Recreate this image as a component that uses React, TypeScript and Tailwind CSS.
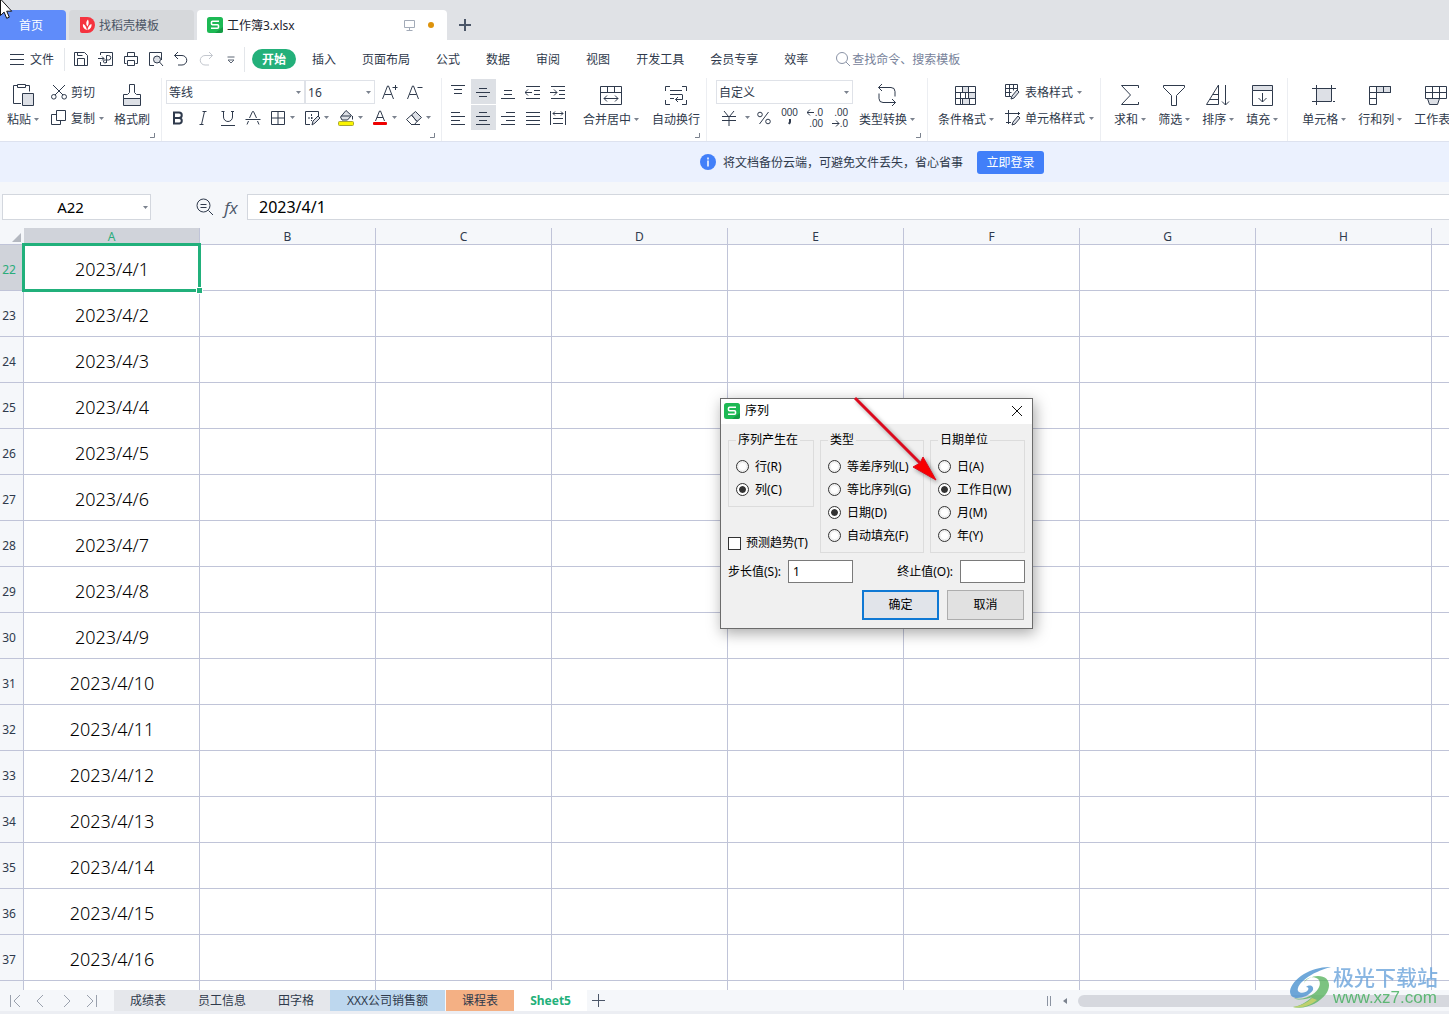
import { useState } from 'react';
import type { ReactNode } from 'react';

const INK = '#2f3a4c';
const FILL = '#dde0e6';

const menuItems = ['插入', '页面布局', '公式', '数据', '审阅', '视图', '开发工具', '会员专享', '效率'];
const columns = ['A', 'B', 'C', 'D', 'E', 'F', 'G', 'H', 'I'];
const firstRow = 22;
const rows = Array.from({ length: 17 }, (_, i) => ({
  num: firstRow + i,
  date: i < 16 ? `2023/4/${i + 1}` : '',
}));

interface IconProps {
  size?: number;
  children: ReactNode;
  className?: string;
}

function Icon({ size = 16, children, className = '' }: IconProps) {
  return (
    <svg
      width={size}
      height={size}
      viewBox={`0 0 ${size} ${size}`}
      fill="none"
      stroke={INK}
      className={`shrink-0 ${className}`}
      aria-hidden="true"
    >
      {children}
    </svg>
  );
}

function Caret() {
  return (
    <svg width="5" height="3" viewBox="0 0 5 3" className="shrink-0" aria-hidden="true">
      <path d="M0 0h5L2.500 3z" fill="#7b828e" />
    </svg>
  );
}

function SheetLogo() {
  return (
    <svg width="16" height="16" viewBox="0 0 16 16" className="shrink-0" aria-hidden="true">
      <rect width="16" height="16" rx="2.500" fill="#1db954" />
      <path d="M16 10v3.500a2.500 2.500 0 0 1-2.500 2.500H8z" fill="#149a44" />
      <path d="M12 4.200H5.500a1 1 0 0 0-1 1v1.500a1 1 0 0 0 1 1h5a1 1 0 0 1 1 1v1.600a1 1 0 0 1-1 1H4" fill="none" stroke="#fff" strokeWidth="1.600" />
    </svg>
  );
}

function BigButton({ icon, label, caret = true }: { icon: ReactNode; label: string; caret?: boolean }) {
  return (
    <button className="flex shrink-0 flex-col items-center gap-1 pt-[5px]">
      <Icon size={24}>{icon}</Icon>
      <span className="flex items-center gap-[3px] whitespace-nowrap">
        {label}
        {caret && <Caret />}
      </span>
    </button>
  );
}

function RowButton({ icon, label, caret = true }: { icon: ReactNode; label: string; caret?: boolean }) {
  return (
    <button className="flex h-[26px] items-center gap-1 whitespace-nowrap">
      <Icon>{icon}</Icon>
      {label}
      {caret && <Caret />}
    </button>
  );
}

function Tool({ name, children, active = false }: { name: string; children: ReactNode; active?: boolean }) {
  return (
    <button
      aria-label={name}
      className={`flex h-[25px] w-[25px] shrink-0 items-center pl-1 ${active ? 'bg-[#dde0e5]' : ''}`}
    >
      <Icon>{children}</Icon>
    </button>
  );
}

function DropTool({ name, children }: { name: string; children: ReactNode }) {
  return (
    <button aria-label={name} className="flex h-[25px] w-[34px] shrink-0 items-center gap-1 pl-1">
      <Icon>{children}</Icon>
      <Caret />
    </button>
  );
}

function Picker({ name, value, className }: { name: string; value: string; className: string }) {
  return (
    <div className={`relative h-6 ${className}`}>
      <select
        aria-label={name}
        defaultValue={value}
        className="h-full w-full appearance-none border border-[#dfe2e8] bg-white px-[2px] outline-none"
      >
        <option>{value}</option>
      </select>
      <span className="pointer-events-none absolute inset-y-0 right-1 flex items-center">
        <Caret />
      </span>
    </div>
  );
}

function Group({ children, className, corner = false }: { children: ReactNode; className: string; corner?: boolean }) {
  return (
    <div className={`relative flex shrink-0 border-r border-[#eceef2] ${className}`}>
      {children}
      {corner && (
        <svg width="5" height="5" viewBox="0 0 5 5" className="absolute right-[6px] bottom-[3px]" aria-hidden="true">
          <path d="M0 4.500h4.500V0" fill="none" stroke="#7b828e" />
        </svg>
      )}
    </div>
  );
}

function TitleTabs() {
  return (
    <div className="relative flex h-10 shrink-0 items-end gap-[3px] overflow-hidden bg-[#e0e2e6]">
      <button className="h-[30px] w-[66px] rounded-tr bg-[#5f8cfa] pr-1 text-white">首页</button>
      <button className="flex h-[30px] w-[125px] items-center gap-1 rounded-t bg-[#d6d8db] pl-[10px] text-[#4b5565]">
        <svg width="16" height="16" viewBox="0 0 16 16" aria-hidden="true">
          <path d="M1 0h7.500a7.500 8 0 0 1 0 16H3a2 2 0 0 1-2-2z" fill="#f5333f" />
          <path d="M8 13C4.500 12 3.500 9.500 4 7c2 .8 3.200 2.500 4 6zM8.500 9.500C6.500 7 7 4.500 9 2.500c1 2.500 1 4.500-.5 7zM8.500 13c.3-3 1.700-5.200 4-6 .5 3-1 5.300-4 6z" fill="#fff" />
        </svg>
        找稻壳模板
      </button>
      <div className="flex h-[30px] w-[250px] items-center gap-1 rounded-t bg-white px-[10px] text-[#1c2430]">
        <SheetLogo />
        <span className="flex-1">工作簿3.xlsx</span>
        <svg width="13" height="12" viewBox="0 0 13 12" fill="none" stroke="#a3abb8" aria-hidden="true">
          <path d="M1.500 1.500h10v7h-10zM6.500 8.500v3M3.500 11.500h6" />
        </svg>
        <span className="mr-[3px] ml-2 h-[6px] w-[6px] rounded-full bg-[#dd930c]" />
      </div>
      <button aria-label="新建" className="flex h-[30px] w-[30px] items-center justify-center">
        <svg width="12" height="12" viewBox="0 0 12 12" stroke="#4b5668" strokeWidth="2" aria-hidden="true">
          <path d="M6 0v12M0 6h12" />
        </svg>
      </button>
      {/* mouse pointer */}
      <svg width="13" height="20" viewBox="0 0 13 20" className="absolute top-0 left-0" aria-hidden="true">
        <path d="M.5-1v16.500l3.600-3.400 2.600 6.200 2.600-1.100-2.600-6h5z" fill="#fff" stroke="#111" />
      </svg>
    </div>
  );
}

function MenuBar() {
  return (
    <nav className="flex h-[38px] shrink-0 items-center overflow-hidden bg-white whitespace-nowrap">
      <button className="flex items-center gap-[6px] border-r border-[#e3e6ea] py-[3px] pr-[10px] pl-[10px]">
        <svg width="14" height="11" viewBox="0 0 14 11" stroke={INK} aria-hidden="true">
          <path d="M0 .5h14M0 5.500h14M0 10.500h14" />
        </svg>
        文件
      </button>
      <div className="flex border-r border-[#e3e6ea] pl-1">
        <Tool name="保存">
          <path d="M1.500 1.500h10l3 3v10h-13zM4.500 14.500v-7h7v7M4.500 1.500v3h5" />
        </Tool>
        <Tool name="输出为PDF">
          <path d="M2.500 4V1.500h12v13h-12V11M0 7.500h6M4 5.500l2 2-2 2M8.500 12V4.500h2a2.200 2.200 0 0 1 0 4.500h-3a1.500 1.500 0 1 0 1 1.500" />
        </Tool>
        <Tool name="打印">
          <path d="M4.500 5.500v-4h7v4M3.500 12.500h-2v-7h13v7h-2M4.500 9.500h7v5h-7z" />
        </Tool>
        <Tool name="打印预览">
          <path d="M6 14.500H1.500v-13h12V9" />
          <circle cx="9" cy="8.500" r="3.500" fill={FILL} />
          <path d="M11.500 11l3.500 4" />
        </Tool>
        <Tool name="撤销">
          <path d="M5 1L1.500 4.500 5 8M1.500 4.500H9a4.500 4.500 0 0 1 0 9.500H5" />
        </Tool>
        <Tool name="恢复">
          <path d="M11 1l3.500 3.500L11 8M14.500 4.500H7A4.500 4.500 0 0 0 7 14h4" stroke="#c3c7ce" />
        </Tool>
        <Tool name="自定义快速访问">
          <path d="M4.500 6h7M5 9l3 3 3-3z" stroke="#5d6675" />
        </Tool>
      </div>
      <button className="mr-4 ml-[7px] h-5 rounded-full bg-[#23b07a] px-[10px] font-bold text-white">开始</button>
      <div className="flex gap-[26px]">
        {menuItems.map((item) => (
          <button key={item}>{item}</button>
        ))}
      </div>
      <button className="ml-7 flex items-center gap-[2px] text-[#77829a]">
        <svg width="14" height="14" viewBox="0 0 14 14" fill="none" stroke="#8a93a6" aria-hidden="true">
          <circle cx="6" cy="6" r="5.500" />
          <path d="M10 10l4 4" />
        </svg>
        查找命令、搜索模板
      </button>
    </nav>
  );
}

function Ribbon() {
  return (
    <div className="flex h-16 shrink-0 overflow-hidden border-b border-[#dde2ef] bg-white">
      <Group className="gap-3 pr-[11px] pl-[7px]" corner>
        <BigButton
          label="粘贴"
          icon={
            <>
              <path d="M10 20.500H2.500v-18h4M14.500 2.500h4v6M6.500 1.500h8v3h-8z" />
              <path d="M11.500 10.500h11v12h-11z" fill={FILL} />
            </>
          }
        />
        <div className="flex w-[51px] flex-col items-start pt-px">
          <RowButton
            label="剪切"
            caret={false}
            icon={
              <>
                <path d="M2 1l10 10M14 1L4 11" />
                <circle cx="2.800" cy="12.800" r="2.300" />
                <circle cx="13.200" cy="12.800" r="2.300" />
              </>
            }
          />
          <RowButton label="复制" icon={<path d="M5.500.500h9v10h-9zM5.500 4.500h-5v10h9v-4" />} />
        </div>
        <BigButton
          label="格式刷"
          caret={false}
          icon={
            <>
              <path d="M3.500 15.500h17v7h-17z" fill={FILL} />
              <path d="M9.500 1.500h5v8l2 2h4v4h-17v-4h4l2-2z" />
            </>
          }
        />
      </Group>

      <Group className="flex-col pt-px pr-[5px] pl-1" corner>
        <div className="flex h-[26px] items-center">
          <Picker name="字体" value="等线" className="w-[139px]" />
          <Picker name="字号" value="16" className="w-[70px]" />
          <div className="flex pl-[3px]">
            <Tool name="增大字号">
              <path d="M.500 15L5.500 2h1l5 13M2.500 10.500h7M10.500 3.500h5M13.500 1v5" />
            </Tool>
            <Tool name="减小字号">
              <path d="M.500 15L5.500 2h1l5 13M2.500 10.500h7M10.500 3.500h5" />
            </Tool>
          </div>
        </div>
        <div className="flex h-[25px] items-center">
          <Tool name="加粗">
            <path d="M4 2.500h5a2.700 2.700 0 0 1 0 5.500H4zM4 8h5.500a2.800 2.800 0 0 1 0 5.500H4z" strokeWidth="2" />
          </Tool>
          <Tool name="倾斜">
            <path d="M7.500 1.500h4M4.500 14.500h4M9.500 1.500l-3 13" />
          </Tool>
          <Tool name="下划线">
            <path d="M3.500 1v6a4.500 4.500 0 0 0 9 0V1M1.500 1.500h3M11 1.500h3M1 15.500h14" />
          </Tool>
          <Tool name="删除线">
            <path d="M4.500 8l3-6.500h1l3 6.500M.500 9.500h15M3.500 11L2 14.500M12.500 11l1.500 3.500" />
          </Tool>
          <DropTool name="边框">
            <path d="M1.500 1.500h13v13h-13zM8 1.500v13M1.500 8h13" />
          </DropTool>
          <DropTool name="单元格格式">
            <path d="M6 14.500H1.500v-13h13V6" />
            <path d="M4 8h6M7.500 4v7" strokeDasharray="2 1" />
            <path d="M8 15l1-4 5-5 2 2-5 5z" fill={FILL} />
          </DropTool>
          <DropTool name="填充颜色">
            <path d="M8 .5l5.500 5-4 4.500H4L2.500 7zM3 6h10" fill={FILL} />
            <path d="M14.500 6v3.500" />
            <rect x=".5" y="11.500" width="15" height="4" rx="1" fill="#fbf500" stroke="#a8a630" />
          </DropTool>
          <DropTool name="字体颜色">
            <path d="M3.500 11L7.500 1h1l4 10M5 7.500h6" />
            <rect x="1" y="12" width="14" height="3" rx="1" fill="#ee0000" stroke="none" />
          </DropTool>
          <DropTool name="清除">
            <path d="M5.500 5L9.500 1.500l6 6-4.500 4z" fill={FILL} />
            <path d="M5.500 5L.500 9.500l5 5h3l2.500-3zM5 14.500h9" />
          </DropTool>
        </div>
      </Group>

      <Group className="pr-[6px] pl-1" corner>
        <div className="mr-3 flex flex-col gap-px pt-px">
          <div className="flex">
            <Tool name="顶端对齐">
              <path d="M1 1.500h14M4 5.500h8M4 9.500h8" />
            </Tool>
            <Tool name="垂直居中" active>
              <path d="M4 4.500h8M1 8.500h14M4 12.500h8" />
            </Tool>
            <Tool name="底端对齐">
              <path d="M4 6.500h8M4 10.500h8M1 14.500h14" />
            </Tool>
            <Tool name="减少缩进">
              <path d="M1 2.500h14M9 6.500h6M9 10.500h6M1 14.500h14M0 8.500h7M3 5.500l-3 3 3 3" />
            </Tool>
            <Tool name="增加缩进">
              <path d="M1 2.500h14M9 6.500h6M9 10.500h6M1 14.500h14M0 8.500h7M4 5.500l3 3-3 3" />
            </Tool>
          </div>
          <div className="flex">
            <Tool name="左对齐">
              <path d="M1 2.500h9M1 6.500h14M1 10.500h9M1 14.500h14" />
            </Tool>
            <Tool name="水平居中" active>
              <path d="M4 2.500h8M1 6.500h14M4 10.500h8M1 14.500h14" />
            </Tool>
            <Tool name="右对齐">
              <path d="M6 2.500h9M1 6.500h14M6 10.500h9M1 14.500h14" />
            </Tool>
            <Tool name="两端对齐">
              <path d="M1 2.500h14M1 6.500h14M1 10.500h14M1 14.500h14" />
            </Tool>
            <Tool name="分散对齐">
              <path d="M.500 1v14M15.500 1v14M3 3.500h10M5 1.500l-2 2 2 2M11 1.500l2 2-2 2M3 8.500h10M3 13.500h10" />
            </Tool>
          </div>
        </div>
        <BigButton
          label="合并居中"
          icon={<path d="M1.500 3.500h21v18h-21zM1.500 9.500h21M8.500 3.500v6M15.500 3.500v6M5 15.500h14M8 12.500l-3 3 3 3M16 12.500l3 3-3 3" />}
        />
        <span className="w-[13px] shrink-0" />
        <BigButton
          label="自动换行"
          caret={false}
          icon={
            <path d="M6 3.500H1.500V8M18 3.500h4.500V8M6 21.500H1.500V17M18 21.500h4.500V17M6 7.500h12M6 11.500h12M6 15.500h4M18.500 11.500v5h-7M14 14l-2.500 2.500L14 19" />
          }
        />
      </Group>

      <Group className="gap-[6px] pr-3 pl-[9px]" corner>
        <div className="pt-[2px]">
          <Picker name="数字格式" value="自定义" className="w-[137px]" />
          <div className="flex h-[27px] items-center font-['Liberation_Sans'] text-[10px] leading-[11px]">
            <button aria-label="货币" className="flex w-9 items-center gap-2 pl-[5px]">
              <Icon>
                <path d="M3 1l4.500 5.500M13 1L8.500 6.500M1 6.500h14M1 10.500h14M8 6.500V16" />
              </Icon>
              <Caret />
            </button>
            <Tool name="百分比">
              <circle cx="4" cy="4.500" r="2.300" />
              <circle cx="12" cy="11.500" r="2.300" />
              <path d="M12.500 2l-9 12" />
            </Tool>
            <button aria-label="千位分隔样式" className="flex h-[25px] w-[25px] flex-col items-center justify-center">
              <span>000</span>
              <Icon size={10}>
                <path d="M5 1v3l-1 2" strokeWidth="2" />
              </Icon>
            </button>
            <button aria-label="增加小数位数" className="flex h-[25px] w-[25px] flex-col items-end justify-center pr-1">
              <span className="flex items-center">
                <Icon size={8}>
                  <path d="M0 4.500h7M3 1.500l-3 3 3 3" />
                </Icon>
                .0
              </span>
              <span>.00</span>
            </button>
            <button aria-label="减少小数位数" className="flex h-[25px] w-[25px] flex-col items-end justify-center pr-1">
              <span>.00</span>
              <span className="flex items-center">
                <Icon size={8}>
                  <path d="M0 4.500h7M4 1.500l3 3-3 3" />
                </Icon>
                .0
              </span>
            </button>
          </div>
        </div>
        <BigButton
          label="类型转换"
          icon={<path d="M3.500 4.500H16a4 4 0 0 1 4 4v5M7 1L3.500 4.500 7 8M20.500 19.500H8a4 4 0 0 1-4-4v-5M17 16l3.500 3.500L17 23" />}
        />
      </Group>

      <Group className="gap-[11px] pr-[6px] pl-[10px]">
        <BigButton
          label="条件格式"
          icon={
            <>
              <path d="M8.500 3.500h6v6h-6zM8.500 15.500h7v6h-7zM14.500 9.500h7v6h-7z" fill={FILL} />
              <path d="M1.500 3.500h20v18h-20zM1.500 9.500h20M1.500 15.500h20M8.500 3.500v6M14.500 3.500v6M6.500 9.500v12M11.500 9.500v6M15.500 15.500v6" />
            </>
          }
        />
        <div className="flex flex-col items-start pt-px">
          <RowButton
            label="表格样式"
            icon={
              <>
                <path d="M6 12.500H.500v-12h12V6M.500 4.500h12M.500 8.500h6M4.500.500v12M8.500.500v6" />
                <path d="M6 15l1-3 5-6 2 2-5 6z" fill={FILL} />
              </>
            }
          />
          <RowButton
            label="单元格样式"
            icon={
              <>
                <path d="M0 3.500h15M3.500 0v14M13.500 2v3M1 12.500h5" />
                <path d="M7 15l1-3 5-6 2 2-5 6z" fill={FILL} />
              </>
            }
          />
        </div>
      </Group>

      <Group className="gap-3 pr-[9px] pl-[13px]">
        <BigButton label="求和" icon={<path d="M20.500 5V2.500h-17l9 9.500-9 9.500h17V19" />} />
        <BigButton label="筛选" icon={<path d="M1.500 2.500h21v2l-8 8v10h-5v-10l-8-8z" />} />
        <BigButton label="排序" icon={<path d="M12.500 21.500V2L.500 21.500zM4 16.500h8.500M7 11.500h5.500M19.500 2v20M16 18.500l3.500 3.500 3.500-3.500" />} />
        <BigButton
          label="填充"
          icon={
            <>
              <path d="M2.500 2.500h20v5h-20z" fill={FILL} />
              <path d="M2.500 7.500v15h20v-15M12.500 10v9M8.500 15l4 4 4-4" />
            </>
          }
        />
      </Group>

      <div className="flex shrink-0 gap-3 pl-[14px]">
        <BigButton
          label="单元格"
          icon={
            <>
              <path d="M4.500 5.500h15v13h-15z" fill={FILL} />
              <path d="M0 5.500h24M0 18.500h18M4.500 2v20M19.500 2v14M21 18.500h2" />
            </>
          }
        />
        <BigButton
          label="行和列"
          icon={
            <>
              <path d="M8.500 3.500h14v6h-14z" fill={FILL} />
              <path d="M1.500 3.500h21v6h-14v12h-7zM1.500 9.500h7M1.500 15.500h7M8.500 3.500v6M15.500 3.500v6" />
            </>
          }
        />
        <BigButton
          label="工作表"
          icon={
            <>
              <path d="M3.500 15.500h12l-2 6h-8z" fill={FILL} />
              <path d="M1.500 3.500h21v12h-21zM1.500 9.500h21M8.500 3.500v12M15.500 3.500v12" />
            </>
          }
        />
      </div>
    </div>
  );
}

function Banner() {
  return (
    <div className="flex h-10 shrink-0 items-center bg-[#ebf1fe] pl-[700px] whitespace-nowrap">
      <svg width="16" height="16" viewBox="0 0 16 16" className="mr-[7px]" aria-hidden="true">
        <circle cx="8" cy="8" r="8" fill="#417ff9" />
        <path d="M8 3.500v2M8 6.500v6" stroke="#fff" strokeWidth="1.500" />
      </svg>
      将文档备份云端，可避免文件丢失，省心省事
      <button className="ml-[14px] h-[23px] w-[67px] rounded-[3px] bg-[#417ff9] text-white">立即登录</button>
    </div>
  );
}

function FormulaBar() {
  return (
    <div className="flex h-[46px] shrink-0 items-center bg-[#f5f7fa] pt-1 pl-[2px] text-black">
      <div className="relative mr-[45px]">
        <input
          aria-label="名称框"
          defaultValue="A22"
          className="h-[26px] w-[149px] border border-[#d3d7de] bg-white pr-3 text-center text-[15px] outline-none"
        />
        <span className="absolute inset-y-0 right-[3px] flex items-center">
          <Caret />
        </span>
      </div>
      <button aria-label="缩小" className="mr-[9px]">
        <Icon size={18}>
          <circle cx="7.500" cy="7.500" r="6.500" />
          <path d="M12.500 12.500L17 17M4.500 6.500h6M4.500 9.500h6" />
        </Icon>
      </button>
      <button aria-label="插入函数" className="w-4 font-['Open_Sans'] text-[17px] text-[#4b5668] italic">
        fx
      </button>
      <input
        aria-label="编辑栏"
        defaultValue="2023/4/1"
        className="ml-2 h-[26px] min-w-0 flex-1 border-y border-l border-[#d3d7de] bg-white pl-[11px] text-base outline-none"
      />
    </div>
  );
}

function Grid() {
  return (
    <div className="min-h-0 flex-1 overflow-hidden bg-white">
      <table className="w-[1608px] table-fixed border-separate border-spacing-0">
        <colgroup>
          <col className="w-6" />
          {columns.map((c) => (
            <col key={c} className="w-[176px]" />
          ))}
        </colgroup>
        <thead>
          <tr className="h-[17px] bg-[#f5f7fa] leading-[14px]">
            <th className="border-b border-[#c0c4d8] p-0">
              <svg width="9" height="9" viewBox="0 0 9 9" className="mt-[3px] ml-3" aria-label="全选">
                <path d="M9 0v9H0z" fill="#b4b8c0" />
              </svg>
            </th>
            {columns.map((c, i) => (
              <th
                key={c}
                className={`border-r border-b border-[#c0c4d8] p-0 pt-[2px] font-normal ${
                  i === 0 ? 'bg-[#d0d3da] text-[#2bac7b]' : 'text-[#2f3a4c]'
                }`}
              >
                {c}
              </th>
            ))}
          </tr>
        </thead>
        <tbody>
          {rows.map((row, r) => (
            <tr key={row.num} className="h-[46px]">
              <th
                className={`border-r border-b border-[#c0c4d8] p-0 pt-[3px] pr-[5px] text-center font-normal ${
                  r === 0 ? 'bg-[#d0d3da] text-[#2bac7b]' : 'bg-[#f5f7fa] text-[#2f3a4c]'
                }`}
              >
                {row.date && row.num}
              </th>
              {columns.map((c, i) => (
                <td
                  key={c}
                  className="relative border-r border-b border-[#c0c4d8] p-0 pt-[3px] pl-px text-center text-lg font-light text-black"
                >
                  {i === 0 && row.date}
                  {i === 0 && r === 0 && (
                    <span className="absolute -inset-[2px] z-10 border-[3px] border-[#21b07b]">
                      <span className="absolute -right-[5px] -bottom-[5px] h-[7px] w-[7px] border border-white bg-[#21b07b]" />
                    </span>
                  )}
                </td>
              ))}
            </tr>
          ))}
        </tbody>
      </table>
    </div>
  );
}

function SheetTabs() {
  return (
    <footer className="flex h-6 shrink-0 border-b-[3px] border-[#eceef3] bg-[#f5f7fa] whitespace-nowrap">
      <div className="flex w-[114px] shrink-0 items-center gap-[9px] pl-2">
        {['M2.500 2v12M12 2L6 8l6 6', 'M10 2L4 8l6 6', 'M6 2l6 6-6 6', 'M4 2l6 6-6 6M13.500 2v12'].map((d) => (
          <svg key={d} width="16" height="16" viewBox="0 0 16 16" fill="none" stroke="#9aa1ad" aria-hidden="true">
            <path d={d} />
          </svg>
        ))}
      </div>
      <button className="bg-[#e5e7eb] px-4">成绩表</button>
      <button className="bg-[#e5e7eb] px-4">员工信息</button>
      <button className="bg-[#e5e7eb] px-4">田字格</button>
      <button className="mr-px w-[115px] bg-[#bdd7ee]">XXX公司销售额</button>
      <button className="bg-[#f4b084] px-4">课程表</button>
      <button className="w-[73px] bg-white font-bold text-[#23b07a]">Sheet5</button>
      <button aria-label="新建工作表" className="px-[5px]">
        <svg width="13" height="13" viewBox="0 0 13 13" stroke="#4b5668" aria-hidden="true">
          <path d="M6.500 0v13M0 6.500h13" />
        </svg>
      </button>
      <div className="ml-auto flex w-[28%] items-center gap-[11px] pl-[3px]">
        <svg width="6" height="10" viewBox="0 0 6 10" stroke="#8b93a1" aria-hidden="true">
          <path d="M1.500 0v10M4.500 0v10" />
        </svg>
        <svg width="4" height="6" viewBox="0 0 4 6" aria-hidden="true">
          <path d="M4 0v6L0 3z" fill="#7b828e" />
        </svg>
        <div className="h-3 flex-1 rounded-l-full bg-[#d6d8de]" />
      </div>
    </footer>
  );
}

interface RadioGroupProps {
  legend: string;
  name: string;
  options: string[];
  initial: string;
  className: string;
}

function RadioGroup({ legend, name, options, initial, className }: RadioGroupProps) {
  const [value, setValue] = useState(initial);
  return (
    <fieldset className={`border border-[#dcdcdc] pb-[5px] ${className}`}>
      <legend className="ml-[7px] px-[2px]">{legend}</legend>
      <div className="flex flex-col pt-[7px] pl-[7px]">
        {options.map((option) => (
          <label key={option} className="flex h-[23px] items-center gap-[6px] whitespace-nowrap">
            <input
              type="radio"
              name={name}
              checked={value === option}
              onChange={() => setValue(option)}
              className="h-[13px] w-[13px] shrink-0 appearance-none rounded-full border border-[#333] bg-white bg-clip-content p-[2px] checked:bg-[#333] checked:shadow-[inset_0_0_0_2px_white]"
            />
            {option}
          </label>
        ))}
      </div>
    </fieldset>
  );
}

function SeriesDialog() {
  return (
    <div
      role="dialog"
      aria-label="序列"
      className="absolute top-[398px] left-[720px] z-20 w-[313px] border border-[#6b6b6b] bg-[#f0f0f0] leading-4 text-black shadow-[2px_4px_14px_rgba(0,0,0,0.35)]"
    >
      <div className="flex h-[25px] items-center gap-[5px] bg-white pr-[9px] pb-px pl-[3px]">
        <SheetLogo />
        <span className="flex-1">序列</span>
        <button aria-label="关闭">
          <svg width="12" height="12" viewBox="0 0 12 12" stroke="#111" aria-hidden="true">
            <path d="M1 1l10 10M11 1L1 11" />
          </svg>
        </button>
      </div>
      <div className="px-[7px] pt-2 pb-2">
        <div className="flex gap-[6px]">
          <div className="flex w-[86px] flex-col justify-between">
            <RadioGroup legend="序列产生在" name="direction" options={['行(R)', '列(C)']} initial="列(C)" className="h-[75px]" />
            <label className="flex h-5 items-center gap-[5px] whitespace-nowrap">
              <input type="checkbox" className="h-[13px] w-[13px] appearance-none border border-[#333] bg-white" />
              预测趋势(T)
            </label>
          </div>
          <RadioGroup
            legend="类型"
            name="type"
            options={['等差序列(L)', '等比序列(G)', '日期(D)', '自动填充(F)']}
            initial="日期(D)"
            className="w-[104px]"
          />
          <RadioGroup
            legend="日期单位"
            name="unit"
            options={['日(A)', '工作日(W)', '月(M)', '年(Y)']}
            initial="工作日(W)"
            className="w-[95px]"
          />
        </div>
        <div className="mt-[7px] flex items-center justify-between">
          <label className="flex items-center gap-[7px]">
            步长值(S):
            <input defaultValue="1" className="h-[23px] w-[65px] border border-[#7a7a7a] bg-white px-1 outline-none" />
          </label>
          <label className="flex items-center gap-[7px]">
            终止值(O):
            <input className="h-[23px] w-[65px] border border-[#7a7a7a] bg-white px-1 outline-none" />
          </label>
        </div>
        <div className="mt-[7px] flex justify-end gap-2 pr-px">
          <button className="h-[30px] w-[77px] border-2 border-[#0f78d4] bg-[#e1e4ea]">确定</button>
          <button className="h-[30px] w-[77px] border border-[#adadad] bg-[#e1e1e1]">取消</button>
        </div>
      </div>
      {/* pointer arrow towards 工作日 */}
      <svg
        width="92"
        height="92"
        viewBox="0 0 92 92"
        className="pointer-events-none absolute -top-[4px] left-[131px] drop-shadow-[2px_2px_2px_rgba(0,0,0,0.4)]"
        aria-hidden="true"
      >
        <path d="M3 3L70 70" stroke="#dc0a1e" strokeWidth="3" />
        <path d="M84 85L61 72l7-4 3-6z" fill="#f80000" stroke="#dc0a1e" />
      </svg>
    </div>
  );
}

function Watermark() {
  return (
    <div className="pointer-events-none absolute right-[11px] bottom-[6px] z-10 flex items-center gap-[2px] opacity-80">
      <svg width="42" height="42" viewBox="0 0 42 42" aria-hidden="true">
        <path d="M42 1C24 0 3 12 1 25c0 5 3 7 7 7 6 0 13-3 16-8 1-4-3-6-7-3 2 0 3 1 2 3-2 3-8 4-10 1C7 18 22 6 42 1z" fill="#4c93d0" />
        <path d="M15 17c1-5 9-8 14-4 4 4 1 11-5 15-6 4-13 6-19 4 4 3 14 1 18-1-5 5-12 9-19 10 13 3 26-4 33-13 6-9 3-18-8-18-6 0-12 3-14 7z" fill="#5cb562" />
        <path d="M4 41c7-1 14-4 19-9l5 2c-6 5-16 9-24 7z" fill="#b9cf52" />
      </svg>
      <div>
        <div className="text-[21px] leading-[22px] font-medium text-[#6ba4dc]">极光下载站</div>
        <div className="font-['Liberation_Sans'] text-[17px] leading-5 text-[#3fae5a]">www.xz7.com</div>
      </div>
    </div>
  );
}

export default function App() {
  return (
    <div className="relative flex h-screen flex-col overflow-hidden bg-[#f5f7fa] font-['Noto_Sans','Noto_Sans_CJK_SC',sans-serif] text-xs leading-[17px] text-[#2f3a4c]">
      <TitleTabs />
      <MenuBar />
      <Ribbon />
      <Banner />
      <FormulaBar />
      <Grid />
      <SheetTabs />
      <SeriesDialog />
      <Watermark />
    </div>
  );
}
